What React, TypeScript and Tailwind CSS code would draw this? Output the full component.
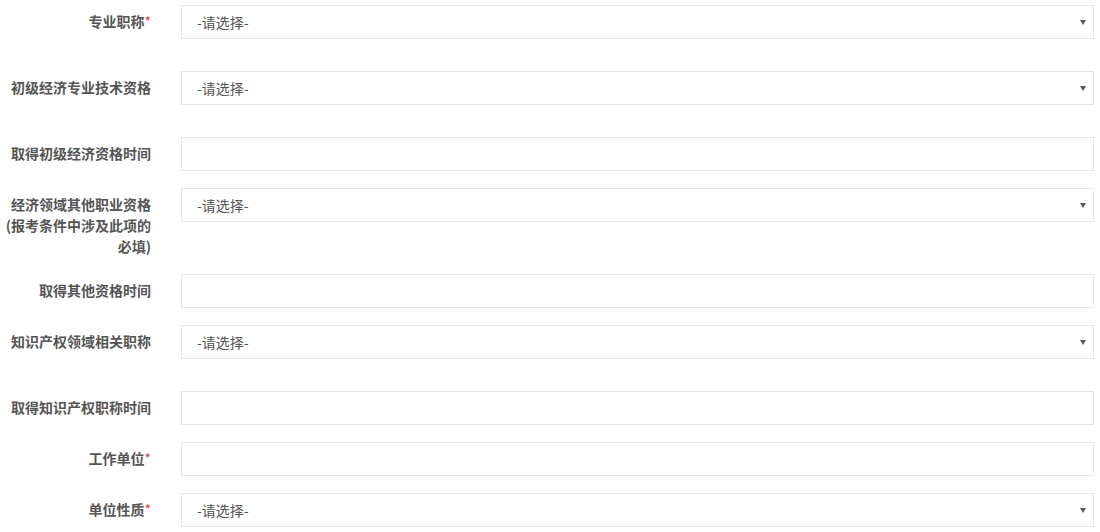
import React from 'react';

type Field = {
  label: string;
  required?: boolean;
  select?: boolean;
};

const FIELDS: Field[] = [
  { label: '专业职称', required: true, select: true },
  { label: '初级经济专业技术资格', select: true },
  { label: '取得初级经济资格时间' },
  { label: '经济领域其他职业资格(报考条件中涉及此项的必填)', select: true },
  { label: '取得其他资格时间' },
  { label: '知识产权领域相关职称', select: true },
  { label: '取得知识产权职称时间' },
  { label: '工作单位', required: true },
  { label: '单位性质', required: true, select: true },
];

const App: React.FC = () => {
  return (
    <div
      className="w-[1100px] h-[532px] overflow-hidden bg-white pt-[5px]"
      style={{ fontFamily: '"Microsoft YaHei", "Noto Sans CJK SC", sans-serif' }}
    >
      {FIELDS.map((f, i) => (
        <div key={i} className="flex items-start mb-[17px]">
          {/* Label */}
          <div className="w-[151px] shrink-0 text-right pt-[6px] text-[14px] leading-[21px] font-bold text-[#555]">
            {f.label}
            {f.required && <span className="text-[#e4393c] font-normal">*</span>}
          </div>

          {/* Control */}
          <div className={`ml-[30px] w-[913px] ${f.select ? 'pb-[15px]' : ''}`}>
            {f.select ? (
              <div className="relative h-[34px] border border-[#e6e6e6] bg-white flex items-center pl-[15px]">
                <span className="text-[14px] text-[#555]">-请选择-</span>
                <span className="absolute right-[7px] top-[14px] w-0 h-0 border-l-[3px] border-r-[3px] border-t-[5px] border-l-transparent border-r-transparent border-t-[#555]"></span>
              </div>
            ) : (
              <input
                type="text"
                className="block w-full h-[34px] border border-[#e6e6e6] bg-white px-[15px] text-[14px] text-[#555] outline-none"
              />
            )}
          </div>
        </div>
      ))}
    </div>
  );
};

export default App;
